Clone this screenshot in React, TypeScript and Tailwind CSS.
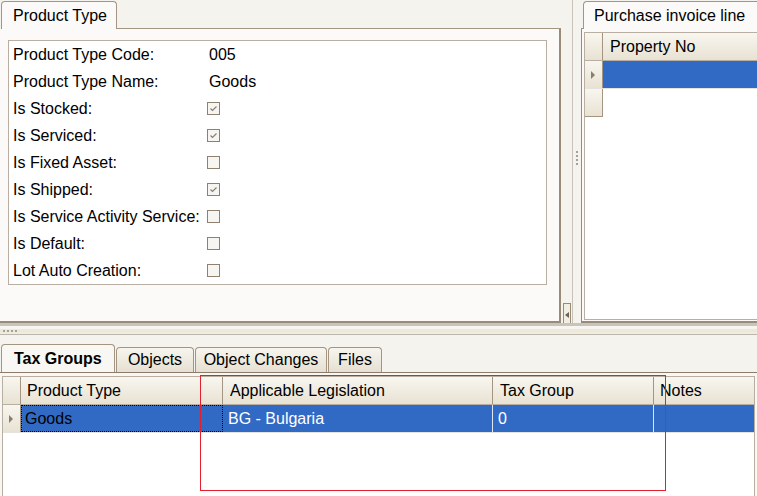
import React from "react";

const font = { fontFamily: '"Liberation Sans", Arial, sans-serif' };

function Check({ on }: { on: boolean }) {
  return (
    <div className="w-[13px] h-[13px] border border-[#8f8070] bg-[#f6f5f1] flex items-center justify-center">
      {on && (
        <svg width="9" height="9" viewBox="0 0 9 9">
          <path d="M1.5 4.5 L3.5 6.5 L7.5 2.5" fill="none" stroke="#8a7f74" strokeWidth="1.2" />
        </svg>
      )}
    </div>
  );
}

function RowArrow() {
  return (
    <svg width="5" height="8" viewBox="0 0 5 8">
      <path d="M0 0 L4 4 L0 8 Z" fill="#8a7d70" />
    </svg>
  );
}

const fields: { label: string; value?: string; check?: boolean }[] = [
  { label: "Product Type Code:", value: "005" },
  { label: "Product Type Name:", value: "Goods" },
  { label: "Is Stocked:", check: true },
  { label: "Is Serviced:", check: true },
  { label: "Is Fixed Asset:", check: false },
  { label: "Is Shipped:", check: true },
  { label: "Is Service Activity Service:", check: false },
  { label: "Is Default:", check: false },
  { label: "Lot Auto Creation:", check: false },
];

const hdr = "bg-gradient-to-b from-[#f8f6ef] to-[#e8e2d3]";

function Dots({ vertical }: { vertical?: boolean }) {
  return (
    <div className={vertical ? "flex flex-col gap-[2px]" : "flex gap-[2px]"}>
      {[0, 1, 2, 3].map((i) => (
        <div key={i} className="w-[2px] h-[2px] bg-[#a8a096]" />
      ))}
    </div>
  );
}

export default function App() {
  return (
    <div
      className="relative w-[757px] h-[496px] bg-[#f4f3ee] flex flex-col overflow-hidden text-[16px] text-black"
      style={font}
    >
      {/* top area */}
      <div className="h-[323px] flex">
        {/* left panel */}
        <div className="w-[561px] flex flex-col">
          <div className="h-[29px] flex items-end pl-[1px]">
            <div className="w-[116px] h-[28px] bg-[#fbfaf8] border border-b-0 border-[#a39581] rounded-t-[4px] pl-[11px] pt-[3px] leading-[22px]">
              Product Type
            </div>
            <div className="flex-1 border-b border-[#a39581]" />
          </div>
          <div className="flex-1 bg-[#fbfaf8] border-r-2 border-b-2 border-[#9a8a78] pl-[8px] pt-[11px]">
            <div className="w-[539px] border border-[#b9aea2] bg-white">
              {fields.map((f) => (
                <div key={f.label} className="h-[27px] flex items-center pl-[4px]">
                  <div className="w-[195px]">{f.label}</div>
                  {f.value !== undefined ? (
                    <div className="pl-[1px]">{f.value}</div>
                  ) : (
                    <div className="-ml-[1px]">
                      <Check on={!!f.check} />
                    </div>
                  )}
                </div>
              ))}
            </div>
          </div>
        </div>

        {/* vertical splitter */}
        <div className="w-[20px] flex">
          <div className="w-[11px] flex flex-col justify-end items-center">
            <div className="w-[8px] h-[23px] mb-[-3px] border border-[#9a8a78] bg-[#f1eee4] flex items-center justify-center">
              <svg width="4" height="6" viewBox="0 0 4 6">
                <path d="M4 0 L0 3 L4 6 Z" fill="#6e6255" />
              </svg>
            </div>
          </div>
          <div className="w-[1px] bg-[#c8c3ba]" />
          <div className="flex-1 flex items-start justify-center pt-[151px]">
            <Dots vertical />
          </div>
        </div>

        {/* right panel */}
        <div className="flex-1 flex flex-col">
          <div className="h-[29px] flex items-end">
            <div className="w-[2px] border-b border-[#a39581]" />
            <div className="flex-1 h-[28px] bg-[#fbfaf8] border border-b-0 border-r-0 border-[#a39581] rounded-tl-[4px] pl-[10px] pt-[3px] leading-[22px] whitespace-nowrap">
              Purchase invoice line
            </div>
          </div>
          <div className="flex-1 bg-[#fbfaf8] border-l border-b-2 border-[#9a8a78] pl-[2px] pt-[3px]">
            <div className="h-[288px] border-l border-t border-b border-[#b9aea2] bg-white">
              <div className={`h-[28px] flex border-b border-[#b9aea2] ${hdr}`}>
                <div className="w-[18px] border-r border-[#a39581]" />
                <div className="flex-1 pl-[7px] leading-[28px]">Property No</div>
              </div>
              <div className="h-[28px] flex border-b border-[#e5e2dc]">
                <div className={`w-[18px] border-r border-[#a39581] flex items-center justify-center ${hdr}`}>
                  <RowArrow />
                </div>
                <div className="flex-1 bg-[#316ac5]" />
              </div>
              <div className="h-[28px] flex">
                <div className={`w-[18px] border-r border-b border-[#a39581] ${hdr}`} />
                <div className="flex-1" />
              </div>
            </div>
          </div>
        </div>
      </div>

      {/* horizontal splitter */}
      <div className="h-[12px] flex flex-col">
        <div className="h-[3px] bg-[#c9c4bb]" />
        <div className="h-[3px] bg-[#f6f5f0]" />
        <div className="h-[3px] bg-[#ece8da] flex items-center pl-[3px]">
          <Dots />
        </div>
        <div className="h-[2px] bg-[#f0ecdf]" />
        <div className="h-[1px] bg-[#bcb6ac]" />
      </div>

      {/* bottom area */}
      <div className="flex-1 flex flex-col">
        <div className="h-[37px] flex items-end pl-[1px] gap-[1px]">
          <div className="w-[114px] h-[28px] bg-[#f8f7f3] border border-b-0 border-[#a39581] rounded-t-[4px] font-bold pl-[12px] flex items-center">
            Tax Groups
          </div>
          <div className="w-[78px] h-[25px] bg-gradient-to-b from-[#f7f5ee] to-[#e6e0d2] border border-b-0 border-[#a39581] rounded-t-[4px] flex items-center justify-center">
            Objects
          </div>
          <div className="w-[132px] h-[25px] bg-gradient-to-b from-[#f7f5ee] to-[#e6e0d2] border border-b-0 border-[#a39581] rounded-t-[4px] flex items-center justify-center">
            Object Changes
          </div>
          <div className="w-[54px] h-[25px] bg-gradient-to-b from-[#f7f5ee] to-[#e6e0d2] border border-b-0 border-[#a39581] rounded-t-[4px] flex items-center justify-center">
            Files
          </div>
        </div>
        <div className="flex-1 border-t border-[#8c7b6b] bg-[#f8f7f3] pl-[2px] pt-[3px] pr-[2px]">
          <div className="h-full border-l border-t border-r border-[#b9aea2] bg-white">
            <div className={`h-[28px] flex border-b border-[#b9aea2] ${hdr}`}>
              <div className="w-[18px] border-r border-[#a39581]" />
              <div className="w-[202px] border-r border-[#a39581] pl-[6px] leading-[28px]">Product Type</div>
              <div className="w-[270px] border-r border-[#a39581] pl-[7px] leading-[28px]">Applicable Legislation</div>
              <div className="w-[161px] border-r border-[#a39581] pl-[7px] leading-[28px]">Tax Group</div>
              <div className="flex-1 pl-[6px] leading-[28px]">Notes</div>
            </div>
            <div className="h-[28px] flex border-b border-[#e5e2dc]">
              <div className={`w-[18px] border-r border-[#a39581] flex items-center justify-center ${hdr}`}>
                <RowArrow />
              </div>
              <div className="w-[202px] bg-[#316ac5] border border-dotted border-black pl-[3px] leading-[26px]">
                Goods
              </div>
              <div className="w-[270px] bg-[#316ac5] border-r border-[#dfe6f2] pl-[5px] leading-[28px] text-white">
                BG - Bulgaria
              </div>
              <div className="w-[161px] bg-[#316ac5] border-r border-[#dfe6f2] pl-[5px] leading-[28px] text-white">
                0
              </div>
              <div className="flex-1 bg-[#316ac5]" />
            </div>
          </div>
        </div>
      </div>

      {/* annotation overlay */}
      <div className="absolute left-[200px] top-[375px] w-[466px] h-[116px] border border-[#e3202d] pointer-events-none" />
    </div>
  );
}
